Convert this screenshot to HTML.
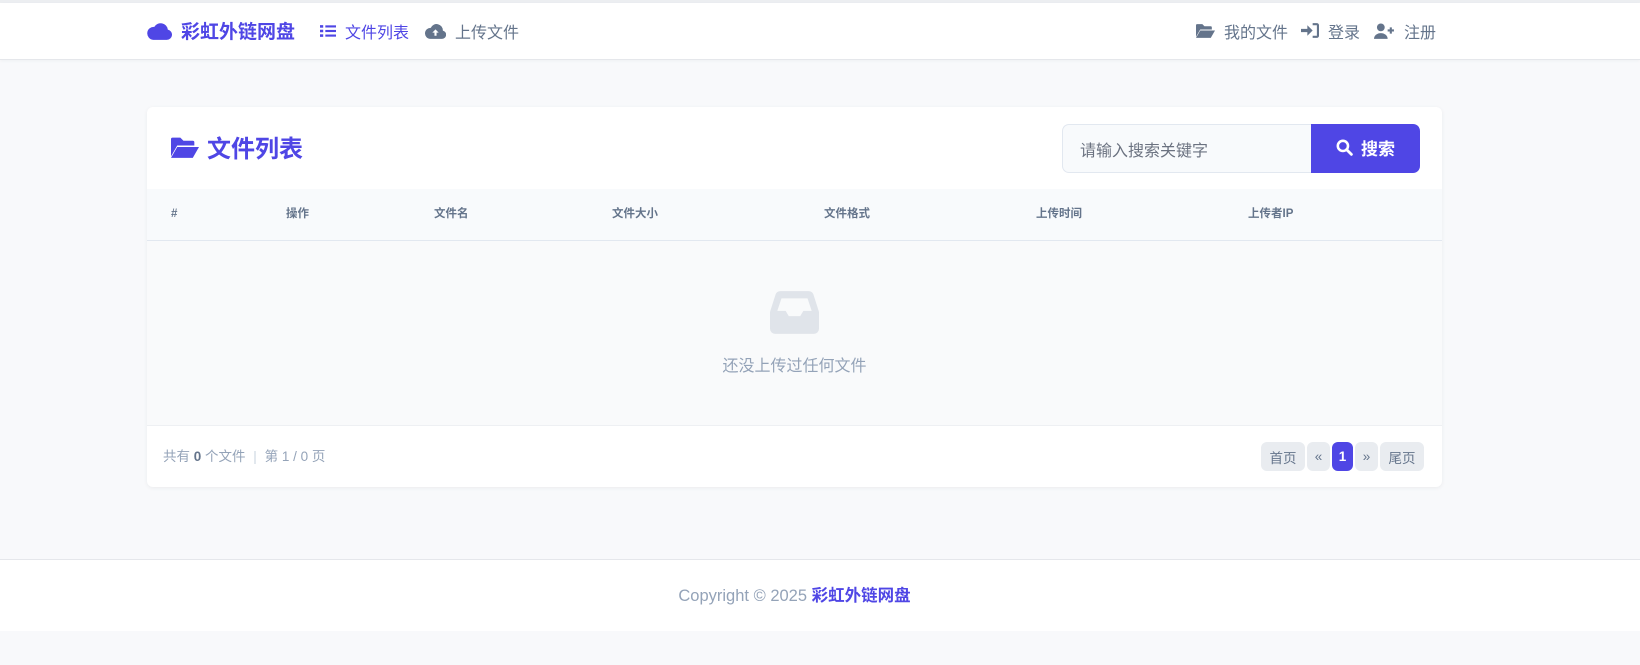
<!DOCTYPE html>
<html><head><meta charset="utf-8"><style>
*{box-sizing:border-box;margin:0;padding:0}
body{width:1640px;height:665px;background:#f8f9fb;font-family:"Liberation Sans","Noto Sans CJK SC",sans-serif;position:relative;overflow:hidden}
.top{position:absolute;left:0;top:0;width:1640px;height:3px;background:#eceef1}
.nav{position:absolute;left:0;top:3px;width:1640px;height:57px;background:#fff;border-bottom:1px solid #e5e7eb;box-shadow:0 1px 3px rgba(0,0,0,.04)}
.a{position:absolute;top:-1px;height:57px;display:flex;align-items:center;font-size:16px;color:#64748b;white-space:nowrap}
.a svg{margin-right:9px}
.card{position:absolute;left:147px;top:107px;width:1295px;height:380px;background:#fff;border-radius:6px;box-shadow:0 1px 4px rgba(0,0,0,.06);overflow:hidden}
.title{position:absolute;left:24px;top:22px;display:flex;align-items:center;color:#4f46e5;font-size:24px;font-weight:bold}
.search{position:absolute;left:915px;top:17px;width:250px;height:49px;border:1px solid #e2e8f0;border-right:none;border-radius:7px 0 0 7px;background:#f8fafc;font-size:16px;color:#6b7280;padding:12px 0 0 17px}
.btn{position:absolute;left:1164px;top:17px;width:109px;height:49px;background:#4f46e5;border-radius:0 7px 7px 0;color:#fff;font-size:17px;font-weight:bold;display:flex;align-items:center;justify-content:center;padding-bottom:2px}
.th{position:absolute;left:0;top:82px;width:1295px;height:52px;background:#f8fafc;border-bottom:1px solid #e2e8f0}
.th span{position:absolute;top:0;height:50px;line-height:50px;font-size:11.5px;font-weight:bold;color:#64748b}
.empty{position:absolute;left:0;top:134px;width:1295px;height:185px;background:#f9fafb;border-bottom:1px solid #eef0f3}
.et{position:absolute;left:0;width:100%;top:111px;text-align:center;color:#94a3b8;font-size:16px}
.foot{position:absolute;left:16px;top:338px;font-size:13.5px;color:#94a3b8}
.pg{position:absolute;top:335px;height:29px;border-radius:6px;background:#e9ecf0;color:#64748b;font-size:13.5px;display:flex;align-items:center;justify-content:center}
.ft{position:absolute;left:0;top:559px;width:1640px;height:72px;background:#fff;border-top:1px solid #e5e7eb}
.ft div{position:absolute;left:147px;width:1295px;top:22px;text-align:center;font-size:16.5px;color:#94a3b8}
</style></head><body>
<div class="top"></div>
<div class="nav">
<div class="a" style="left:147px;color:#4f46e5;font-size:19px;font-weight:bold"><svg width="25" height="19" viewBox="0 0 24 18"><path d="M6 18h13a5 5 0 0 0 1-9.9A7 7 0 0 0 7 5.5 6 6 0 0 0 6 18z" fill="#4f46e5"/></svg>彩虹外链网盘</div>
<div class="a" style="left:320px;color:#4f46e5"><svg width="16" height="14" viewBox="0 0 15 13"><g fill="#4f46e5"><rect x="0" y="1" width="3" height="2.4"/><rect x="0" y="5.3" width="3" height="2.4"/><rect x="0" y="9.6" width="3" height="2.4"/><rect x="5" y="1.2" width="10" height="2"/><rect x="5" y="5.5" width="10" height="2"/><rect x="5" y="9.8" width="10" height="2"/></g></svg>文件列表</div>
<div class="a" style="left:425px"><svg width="21" height="16" viewBox="0 0 20 15"><path d="M5 15h11a4 4 0 0 0 1-7.9A6 6 0 0 0 5.5 4.5 5 5 0 0 0 5 15z" fill="#64748b"/><path d="M10 6l-3 3h2v3h2V9h2z" fill="#fff"/></svg>上传文件</div>
<div class="a" style="left:1196px"><svg width="19" height="15" viewBox="0 0 18 14"><path d="M0 2a1 1 0 0 1 1-1h5l2 2h6a1 1 0 0 1 1 1v2H4L0 13z" fill="#64748b"/><path d="M4 7h14l-4 7H0z" fill="#64748b"/></svg>我的文件</div>
<div class="a" style="left:1301px"><svg width="18" height="15" viewBox="0 0 17 14"><path d="M0 5.5h6V2l5 5-5 5V8.5H0z" fill="#64748b"/><path d="M11 1h4a1 1 0 0 1 1 1v10a1 1 0 0 1-1 1h-4" stroke="#64748b" stroke-width="2" fill="none"/></svg>登录</div>
<div class="a" style="left:1374px"><svg width="21" height="16" viewBox="0 0 20 15"><circle cx="6.5" cy="4" r="3.7" fill="#64748b"/><path d="M0 15a6.5 5.5 0 0 1 13 0z" fill="#64748b"/><path d="M16 4v6M13 7h6" stroke="#64748b" stroke-width="2"/></svg>注册</div>
</div>
<div class="card">
<div class="title"><svg width="28" height="22" viewBox="0 0 18 14" style="margin-right:8px"><path d="M0 2a1 1 0 0 1 1-1h5l2 2h6a1 1 0 0 1 1 1v2H4L0 13z" fill="#4f46e5"/><path d="M4 7h14l-4 7H0z" fill="#4f46e5"/></svg>文件列表</div>
<div class="search">请输入搜索关键字</div>
<div class="btn"><svg width="17" height="17" viewBox="0 0 16 16" style="margin-right:8px"><circle cx="6.5" cy="6.5" r="4.8" stroke="#fff" stroke-width="2.4" fill="none"/><path d="M10 10l4.5 4.5" stroke="#fff" stroke-width="2.6" stroke-linecap="round"/></svg>搜索</div>
<div class="th"><span style="left:24px">#</span><span style="left:139px">操作</span><span style="left:287px">文件名</span><span style="left:465px">文件大小</span><span style="left:677px">文件格式</span><span style="left:889px">上传时间</span><span style="left:1101px">上传者IP</span></div>
<div class="empty"><svg style="position:absolute;left:623px;top:50px" width="49" height="43" viewBox="0 0 47 41"><path d="M10 0h27a5 5 0 0 1 4.7 3.3L47 20v16a5 5 0 0 1-5 5H5a5 5 0 0 1-5-5V20L5.3 3.3A5 5 0 0 1 10 0z" fill="#e0e4ea"/><path d="M11 7h25l4 12h-8l-3 5H18l-3-5H7z" fill="#f9fafb"/></svg><div class="et">还没上传过任何文件</div></div>
<div class="foot">共有 <b style="color:#64748b">0</b> 个文件 <span style="color:#cbd5e1;margin:0 4px">|</span> 第 1 / 0 页</div>
<div class="pg" style="left:1114px;width:44px">首页</div>
<div class="pg" style="left:1160px;width:23px">«</div>
<div class="pg" style="left:1185px;width:21px;background:#4f46e5;color:#fff;font-weight:bold">1</div>
<div class="pg" style="left:1208px;width:23px">»</div>
<div class="pg" style="left:1233px;width:44px">尾页</div>
</div>
<div class="ft"><div>Copyright © 2025 <b style="color:#4f46e5">彩虹外链网盘</b></div></div>
</body></html>
